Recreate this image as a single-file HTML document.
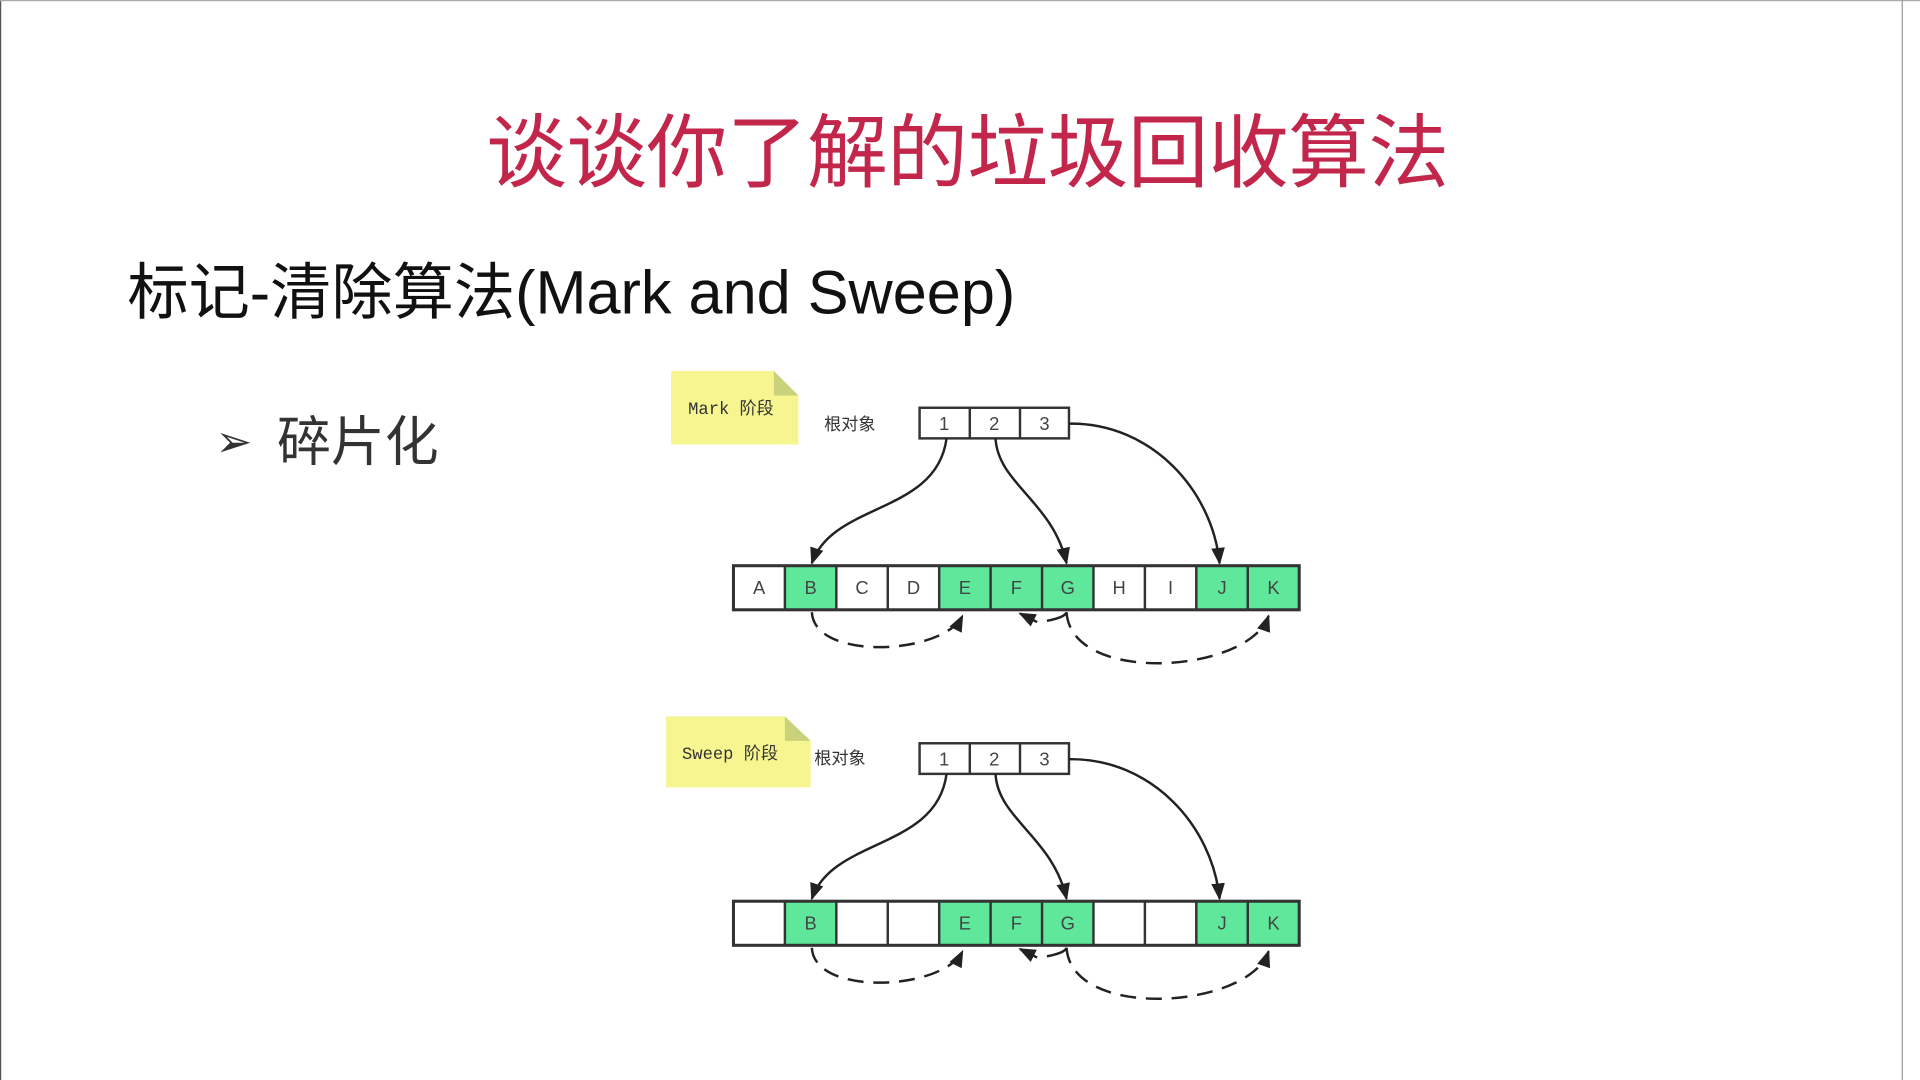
<!DOCTYPE html>
<html><head><meta charset="utf-8"><style>
html,body{margin:0;padding:0;background:#fff;overflow:hidden}
#s{position:absolute;left:0;top:0;width:1568px;height:882px;transform:scale(1.22449);transform-origin:0 0;background:#fff;font-family:"Liberation Sans","Noto Sans CJK SC",sans-serif}
.t{position:absolute;left:0;width:1580px;text-align:center;top:80px;font-size:66px;color:#c3264b;line-height:90px;letter-spacing:-0.5px}
.h{position:absolute;left:104px;top:206px;font-size:50px;color:#111;line-height:66px;letter-spacing:0}
.b{position:absolute;left:176px;top:333px;font-size:44px;color:#333;line-height:56px}
.b span{font-size:36px;margin-right:20px;vertical-align:3px}
</style></head><body><div id="s">
<div style="position:absolute;left:0;top:0;width:1px;height:882px;background:#555"></div>
<div style="position:absolute;left:0;top:0;width:1568px;height:1px;background:#aaa"></div>
<div style="position:absolute;left:1553px;top:0;width:1px;height:882px;background:#999"></div>
<div class="t">谈谈你了解的垃圾回收算法</div>
<div class="h">标记-清除算法(Mark and Sweep)</div>
<div class="b"><span>➢</span>碎片化</div>
<svg style="position:absolute;left:0;top:0" width="1568" height="882" viewBox="0 0 1568 882" font-family="Liberation Sans, Noto Sans CJK SC, sans-serif">
<defs><marker id="a" viewBox="0 0 10 10" refX="9" refY="5" markerWidth="7" markerHeight="7" orient="auto"><path d="M0,1L10,5L0,9z" fill="#222"/></marker></defs>
<path d="M548,303H632L652,323V363H548z" fill="#f6f590"/><path d="M632,303L652,323H632z" fill="#c9d27a"/>
<text x="562" y="338" font-family="Liberation Mono, Noto Sans CJK SC, monospace" font-size="14" fill="#333">Mark 阶段</text>
<text x="673" y="351" font-size="14" fill="#333">根对象</text>
<g id="g1">
<rect x="751" y="333" width="122" height="25" fill="#fff" stroke="#333" stroke-width="2"/>
<line x1="792" y1="333" x2="792" y2="358" stroke="#333" stroke-width="2"/><line x1="833" y1="333" x2="833" y2="358" stroke="#333" stroke-width="2"/>
<g font-size="15" fill="#444" text-anchor="middle"><text x="771" y="351">1</text><text x="812" y="351">2</text><text x="853" y="351">3</text></g>
<g fill="none" stroke="#222" stroke-width="2">
<path d="M773,358C765,420 680,410 663,460" marker-end="url(#a)"/>
<path d="M813,358C815,395 860,410 871,460" marker-end="url(#a)"/>
<path d="M873,346C940,345 990,400 996,460" marker-end="url(#a)"/>
<g stroke-dasharray="13,8">
<path d="M663,500C665,540 770,535 786,503" marker-end="url(#a)"/>
<path d="M871,500C875,560 1020,550 1036,503" marker-end="url(#a)"/>
</g>
<path d="M855,507C865,505 870,503 871,500"/>
<path d="M847,508L833,501" marker-end="url(#a)"/>
</g>
</g>
<g fill="#5fe89b"><rect x="641" y="462" width="42" height="36"/><rect x="767" y="462" width="126" height="36"/><rect x="976" y="462" width="85" height="36"/></g>
<rect x="599" y="462" width="462" height="36" fill="none" stroke="#333" stroke-width="2.5"/>
<g stroke="#333" stroke-width="2"><line x1="641" y1="462" x2="641" y2="498"/><line x1="683" y1="462" x2="683" y2="498"/><line x1="725" y1="462" x2="725" y2="498"/><line x1="767" y1="462" x2="767" y2="498"/><line x1="809" y1="462" x2="809" y2="498"/><line x1="851" y1="462" x2="851" y2="498"/><line x1="893" y1="462" x2="893" y2="498"/><line x1="935" y1="462" x2="935" y2="498"/><line x1="977" y1="462" x2="977" y2="498"/><line x1="1019" y1="462" x2="1019" y2="498"/></g>
<g font-size="15" fill="#444" text-anchor="middle"><text x="620" y="485">A</text><text x="662" y="485">B</text><text x="704" y="485">C</text><text x="746" y="485">D</text><text x="788" y="485">E</text><text x="830" y="485">F</text><text x="872" y="485">G</text><text x="914" y="485">H</text><text x="956" y="485">I</text><text x="998" y="485">J</text><text x="1040" y="485">K</text></g>
<path d="M544,585H641L662,605V643H544z" fill="#f6f590"/><path d="M641,585L662,605H641z" fill="#c9d27a"/>
<text x="557" y="620" font-family="Liberation Mono, Noto Sans CJK SC, monospace" font-size="14" fill="#333">Sweep 阶段</text>
<text x="665" y="624" font-size="14" fill="#333">根对象</text>
<g transform="translate(0,274)">
<use href="#g1"/>
<g fill="#5fe89b"><rect x="641" y="462" width="42" height="36"/><rect x="767" y="462" width="126" height="36"/><rect x="976" y="462" width="85" height="36"/></g>
<rect x="599" y="462" width="462" height="36" fill="none" stroke="#333" stroke-width="2.5"/>
<g stroke="#333" stroke-width="2"><line x1="641" y1="462" x2="641" y2="498"/><line x1="683" y1="462" x2="683" y2="498"/><line x1="725" y1="462" x2="725" y2="498"/><line x1="767" y1="462" x2="767" y2="498"/><line x1="809" y1="462" x2="809" y2="498"/><line x1="851" y1="462" x2="851" y2="498"/><line x1="893" y1="462" x2="893" y2="498"/><line x1="935" y1="462" x2="935" y2="498"/><line x1="977" y1="462" x2="977" y2="498"/><line x1="1019" y1="462" x2="1019" y2="498"/></g>
<g font-size="15" fill="#444" text-anchor="middle"><text x="662" y="485">B</text><text x="788" y="485">E</text><text x="830" y="485">F</text><text x="872" y="485">G</text><text x="998" y="485">J</text><text x="1040" y="485">K</text></g>
</g>
</svg>
</div></body></html>
